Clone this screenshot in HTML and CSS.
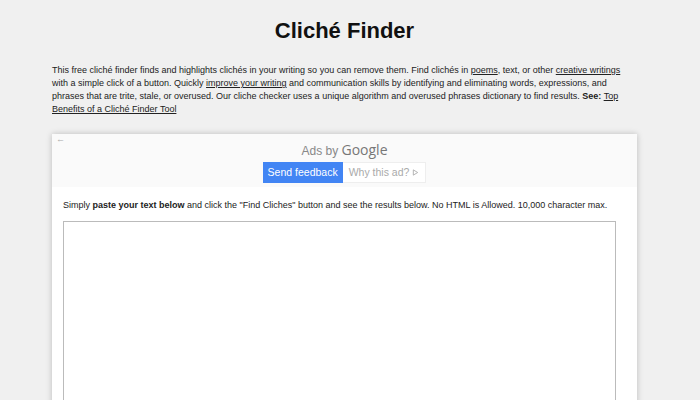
FILE: index.html
```html
<!DOCTYPE html>
<html lang="en">
<head>
<meta charset="utf-8">
<title>Cliché Finder</title>
<link rel="stylesheet" href="styles.css">
</head>
<body>
<main class="page">
  <h1 class="title">Cliché Finder</h1>
  <p class="intro">This free cliché finder finds and highlights clichés in your writing so you can remove them. Find clichés in <a href="#">poems</a>, text, or other <a href="#">creative writings</a> with a simple click of a button. Quickly <a href="#">improve your writing</a> and communication skills by identifying and eliminating words, expressions, and phrases that are trite, stale, or overused. Our cliche checker uses a unique algorithm and overused phrases dictionary to find results. <b>See:</b> <a href="#">Top Benefits of a Cliché Finder Tool</a></p>
  <section class="card">
    <div class="ad">
      <span class="back">&#8592;</span>
      <div class="ads-by">Ads by <span class="google">Google</span></div>
      <div class="ad-buttons">
        <span class="btn-feedback">Send feedback</span>
        <span class="btn-why">Why this ad? <svg class="play" viewBox="0 0 8 8" width="7" height="7"><path d="M1.5 1 L6.5 4 L1.5 7 Z" fill="none" stroke="#aaa" stroke-width="1"/></svg></span>
      </div>
    </div>
    <div class="tool">
      <p class="hint">Simply <b>paste your text below</b> and click the "Find Cliches" button and see the results below. No HTML is Allowed. 10,000 character max.</p>
      <textarea class="input"></textarea>
    </div>
  </section>
</main>
</body>
</html>
```
FILE: styles.css
```css
html, body {
  margin: 0;
  padding: 0;
  background: #f0f0f0;
  font-family: "Liberation Sans", Arial, sans-serif;
  color: #222;
}
.page {
  width: 585px;
  margin-left: 52px;
  padding-top: 17px;
}
.title {
  margin: 0;
  text-align: center;
  font-size: 22px;
  line-height: 28px;
  font-weight: bold;
  color: #111;
}
.intro {
  margin: 19px 0 0 0;
  font-size: 9px;
  line-height: 13px;
  color: #222;
}
.intro a {
  color: #222;
  text-decoration: underline;
}
.card {
  margin-top: 18px;
  background: #fff;
  box-shadow: 0 0 6px rgba(0,0,0,0.22);
  height: 300px;
}
.ad {
  position: relative;
  background: #fafafa;
  height: 53px;
  display: flex;
  flex-direction: column;
  align-items: center;
  padding-top: 7px;
  box-sizing: border-box;
}
.back {
  position: absolute;
  left: 4px;
  top: 0;
  font-size: 9px;
  color: #aaa;
}
.ads-by {
  font-size: 12px;
  color: #888;
  line-height: 17px;
}
.google {
  font-size: 14px;
  font-family: "Open Sans", "Liberation Sans", sans-serif;
  color: #777;
}
.ad-buttons {
  display: flex;
  margin-top: 2px;
  font-size: 10.5px;
  line-height: 21px;
}
.btn-feedback {
  background: #4285f4;
  color: #fff;
  padding: 0 5px;
}
.btn-why {
  background: #fff;
  color: #aaa;
  padding: 0 6px;
  border: 1px solid #eee;
  border-left: none;
  line-height: 19px;
  display: flex;
  align-items: center;
  gap: 3px;
}
.tool {
  padding: 12px 21px 0 11px;
}
.hint {
  margin: 0;
  font-size: 9px;
  line-height: 12px;
  color: #222;
}
.input {
  display: block;
  margin-top: 10px;
  width: 100%;
  height: 200px;
  box-sizing: border-box;
  border: 1px solid #bbb;
  resize: vertical;
}
```
